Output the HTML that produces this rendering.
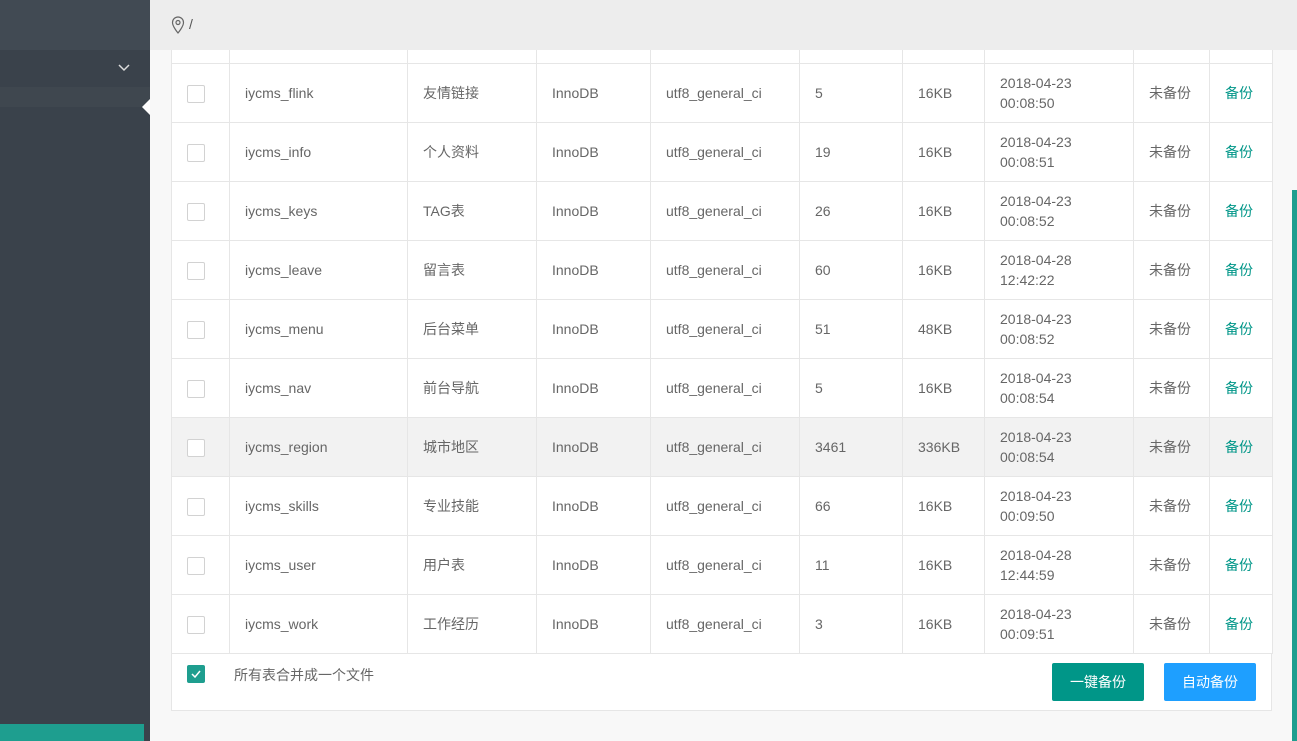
<!DOCTYPE html>
<html><head><meta charset="utf-8"><style>
*{margin:0;padding:0;box-sizing:border-box}
body{width:1297px;height:741px;overflow:hidden;background:#f8f8f8;font-family:"Liberation Sans","Noto Sans CJK SC",sans-serif;font-size:14px;color:#666;position:relative}
.side{position:absolute;left:0;top:0;width:150px;height:741px;background:#3a424b}
.hdr{position:absolute;left:150px;top:0;width:1147px;height:50px;background:#ededed}
table{position:absolute;left:171px;top:50px;border-collapse:collapse;background:#fff;table-layout:fixed}
td{border:1px solid #e6e6e6;height:59px;padding:0 15px;line-height:20px;white-space:nowrap}
tr.top td{height:13px;border-top:none}
tr.hl td{background:#f2f2f2}
.cb{display:inline-block;width:18px;height:18px;border:1px solid #d2d2d2;border-radius:2px;background:#fff;vertical-align:middle}
.g{color:#009688}
.foot{position:absolute;left:171px;top:653px;width:1101px;height:58px;background:#fff;border:1px solid #e6e6e6}
.btn{position:absolute;top:663px;width:92px;height:38px;color:#fff;text-align:center;line-height:38px;border-radius:2px}
</style></head><body>
<div class="side">
<div style="height:50px;background:#414a53"></div>
<div style="height:37px;position:relative"><svg style="position:absolute;left:118px;top:14px" width="12" height="8"><path d="M1 1L6 6L11 1" stroke="#ddd" stroke-width="1.5" fill="none"/></svg></div>
<div style="height:20px;background:#3f474f"></div>
<div style="position:absolute;left:142px;top:99px;width:0;height:0;border-top:8px solid transparent;border-bottom:8px solid transparent;border-right:8px solid #fff"></div>
<div style="position:absolute;left:0;top:724px;width:144px;height:17px;background:#1e9e8f"></div>
</div>
<div class="hdr"><svg style="position:absolute;left:21px;top:16px" width="14" height="18" viewBox="0 0 14 18"><path d="M7 17C7 17 1.5 10.5 1.5 6.5A5.5 5.5 0 0 1 12.5 6.5C12.5 10.5 7 17 7 17Z" stroke="#666" stroke-width="1.2" fill="none"/><circle cx="7" cy="6.5" r="2" stroke="#666" stroke-width="1.2" fill="none"/></svg><span style="position:absolute;left:39px;top:16px;color:#555;font-size:14px">/</span></div>
<table>
<colgroup><col width="58"><col width="178"><col width="129"><col width="114"><col width="149"><col width="103"><col width="82"><col width="149"><col width="76"><col width="63"></colgroup>
<tr class="top"><td></td><td></td><td></td><td></td><td></td><td></td><td></td><td></td><td></td><td></td></tr>
<tr><td><span class="cb"></span></td><td>iycms_flink</td><td>友情链接</td><td>InnoDB</td><td>utf8_general_ci</td><td>5</td><td>16KB</td><td>2018-04-23<br>00:08:50</td><td>未备份</td><td class="g">备份</td></tr>
<tr><td><span class="cb"></span></td><td>iycms_info</td><td>个人资料</td><td>InnoDB</td><td>utf8_general_ci</td><td>19</td><td>16KB</td><td>2018-04-23<br>00:08:51</td><td>未备份</td><td class="g">备份</td></tr>
<tr><td><span class="cb"></span></td><td>iycms_keys</td><td>TAG表</td><td>InnoDB</td><td>utf8_general_ci</td><td>26</td><td>16KB</td><td>2018-04-23<br>00:08:52</td><td>未备份</td><td class="g">备份</td></tr>
<tr><td><span class="cb"></span></td><td>iycms_leave</td><td>留言表</td><td>InnoDB</td><td>utf8_general_ci</td><td>60</td><td>16KB</td><td>2018-04-28<br>12:42:22</td><td>未备份</td><td class="g">备份</td></tr>
<tr><td><span class="cb"></span></td><td>iycms_menu</td><td>后台菜单</td><td>InnoDB</td><td>utf8_general_ci</td><td>51</td><td>48KB</td><td>2018-04-23<br>00:08:52</td><td>未备份</td><td class="g">备份</td></tr>
<tr><td><span class="cb"></span></td><td>iycms_nav</td><td>前台导航</td><td>InnoDB</td><td>utf8_general_ci</td><td>5</td><td>16KB</td><td>2018-04-23<br>00:08:54</td><td>未备份</td><td class="g">备份</td></tr>
<tr class="hl"><td><span class="cb"></span></td><td>iycms_region</td><td>城市地区</td><td>InnoDB</td><td>utf8_general_ci</td><td>3461</td><td>336KB</td><td>2018-04-23<br>00:08:54</td><td>未备份</td><td class="g">备份</td></tr>
<tr><td><span class="cb"></span></td><td>iycms_skills</td><td>专业技能</td><td>InnoDB</td><td>utf8_general_ci</td><td>66</td><td>16KB</td><td>2018-04-23<br>00:09:50</td><td>未备份</td><td class="g">备份</td></tr>
<tr><td><span class="cb"></span></td><td>iycms_user</td><td>用户表</td><td>InnoDB</td><td>utf8_general_ci</td><td>11</td><td>16KB</td><td>2018-04-28<br>12:44:59</td><td>未备份</td><td class="g">备份</td></tr>
<tr><td><span class="cb"></span></td><td>iycms_work</td><td>工作经历</td><td>InnoDB</td><td>utf8_general_ci</td><td>3</td><td>16KB</td><td>2018-04-23<br>00:09:51</td><td>未备份</td><td class="g">备份</td></tr>
</table>
<div class="foot">
<span style="position:absolute;left:15px;top:11px;width:18px;height:18px;background:#1e9e8f;border-radius:2px"><svg width="18" height="18"><path d="M5 9L8 12L13 6" stroke="#fff" stroke-width="1.5" fill="none"/></svg></span>
<span style="position:absolute;left:62px;top:11px">所有表合并成一个文件</span>
</div>
<div class="btn" style="left:1052px;background:#009688">一键备份</div>
<div class="btn" style="left:1164px;background:#1e9fff">自动备份</div>
<div style="position:absolute;left:1292px;top:190px;width:5px;height:551px;background:#1e9e8f"></div>
</body></html>
